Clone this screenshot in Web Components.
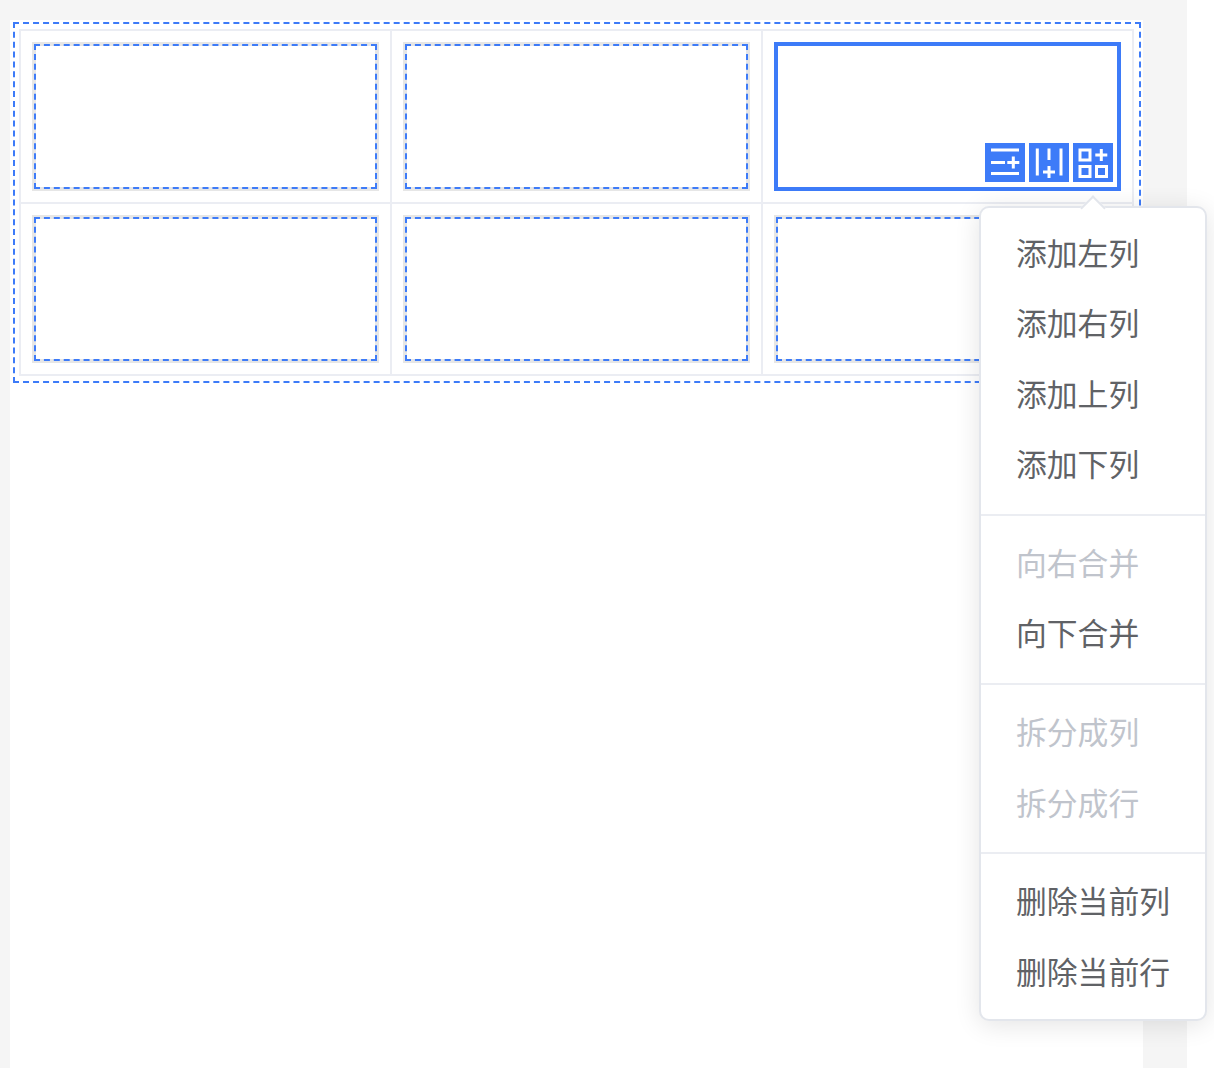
<!DOCTYPE html>
<html lang="zh">
<head>
<meta charset="utf-8">
<title>表格布局</title>
<style>
  html, body { margin: 0; padding: 0; background: #fff; }
  body { font-family: "Noto Sans CJK SC", "Liberation Sans", sans-serif; }
</style>
</head>
<body>
<design-page>
  <layout-table>
    <table-cell></table-cell>
    <table-cell></table-cell>
    <table-cell selected></table-cell>
    <table-cell></table-cell>
    <table-cell></table-cell>
    <table-cell></table-cell>
  </layout-table>
  <context-menu slot="overlay">
    <menu-group>
      <menu-item>添加左列</menu-item>
      <menu-item>添加右列</menu-item>
      <menu-item>添加上列</menu-item>
      <menu-item>添加下列</menu-item>
    </menu-group>
    <menu-group divided>
      <menu-item disabled>向右合并</menu-item>
      <menu-item>向下合并</menu-item>
    </menu-group>
    <menu-group divided>
      <menu-item disabled>拆分成列</menu-item>
      <menu-item disabled>拆分成行</menu-item>
    </menu-group>
    <menu-group divided>
      <menu-item>删除当前列</menu-item>
      <menu-item>删除当前行</menu-item>
    </menu-group>
  </context-menu>
</design-page>

<script>
const BLUE = '#3d7bf8';

function define(name, html) {
  customElements.define(name, class extends HTMLElement {
    constructor() {
      super();
      this.attachShadow({ mode: 'open' }).innerHTML = html;
    }
  });
}

define('design-page', `
  <style>
    :host { display: block; position: relative; width: 1214px; height: 1068px; overflow: hidden; background: #fff; }
    .stage { box-sizing: border-box; width: 1187px; height: 1068px; background: #f5f5f5; padding: 20px 44px 0 10px; display: flex; }
    .canvas { flex: 1; background: #fff; padding: 2px 2px 0 3px; box-sizing: border-box; }
    .overlay-layer { position: absolute; left: 979px; top: 206px; }
  </style>
  <div class="stage"><div class="canvas"><slot></slot></div></div>
  <div class="overlay-layer"><slot name="overlay"></slot></div>
`);

define('layout-table', `
  <style>
    :host { display: block; box-sizing: border-box; border: 2px dashed ${BLUE}; padding: 5px 5px 5px 4px; width: 1128px; height: 361px; }
    .grid { display: grid; grid-template-columns: repeat(3, 369px); grid-template-rows: 171px 170px; gap: 2px; padding: 2px; background: #ebedf3; width: max-content; }
  </style>
  <div class="grid"><slot></slot></div>
`);

define('table-cell', `
  <style>
    :host { display: block; box-sizing: border-box; background: #fff; padding: 11px; }
    .frame { box-sizing: border-box; height: 100%; padding: 2px; background: #e6e6e6; }
    .zone { box-sizing: border-box; height: 100%; border: 2px dashed ${BLUE}; background: #fff; background-clip: padding-box; }
    :host([selected]) .frame { padding: 0; background: transparent; }
    :host([selected]) .zone { position: relative; border: 4px solid ${BLUE}; }
    cell-tools { display: none; }
    :host([selected]) cell-tools { display: flex; }
  </style>
  <div class="frame"><div class="zone"><cell-tools></cell-tools></div></div>
`);

define('cell-tools', `
  <style>
    :host { position: absolute; right: 4px; bottom: 5px; gap: 4px; }
    svg { display: block; width: 40px; height: 39px; background: ${BLUE}; }
    path, rect { fill: none; stroke: #fff; stroke-width: 3; }
  </style>
  <svg viewBox="0 0 40 39" aria-hidden="true"><path d="M6 7H34M6 19.5H20M6 30.5H34M22.3 19.5H34.3M28.3 13.5V25.5"/></svg>
  <svg viewBox="0 0 40 39" aria-hidden="true"><path d="M8.3 5.5V32.5M20 5.5V17M32 5.5V32.5M14 29H26M20 23V35"/></svg>
  <svg viewBox="0 0 40 39" aria-hidden="true"><rect x="7" y="7" width="10" height="10"/><rect x="7" y="23.5" width="10" height="10"/><rect x="23.5" y="23.5" width="10" height="10"/><path d="M22.3 12H34.3M28.3 6V18"/></svg>
`);

define('context-menu', `
  <style>
    :host { display: block; position: relative; box-sizing: border-box; width: 228px; height: 815px; background: #fff; border: 2px solid #e3e6ec; border-radius: 10px; box-shadow: 0 4px 26px rgba(0,0,0,.11); padding-top: 11.1px; }
    .arrow { position: absolute; left: 103px; top: -9.3px; width: 18px; height: 18px; box-sizing: border-box; background: #fff; border: solid #e3e6ec; border-width: 2px 0 0 2px; transform: rotate(45deg); }
  </style>
  <div class="arrow"></div>
  <slot></slot>
`);

define('menu-group', `
  <style>
    :host { display: block; }
    :host([divided]) { margin-top: 13.2px; border-top: 2.2px solid #ebedf2; padding-top: 13.2px; }
  </style>
  <slot></slot>
`);

define('menu-item', `
  <style>
    :host { display: block; height: 70.4px; line-height: 66.8px; padding-left: 35px; font-size: 30.8px; color: #606266; white-space: nowrap; font-family: "Noto Sans CJK SC", "Liberation Sans", sans-serif; }
    :host([disabled]) { color: #c0c4cc; }
  </style>
  <slot></slot>
`);
</script>
</body>
</html>
